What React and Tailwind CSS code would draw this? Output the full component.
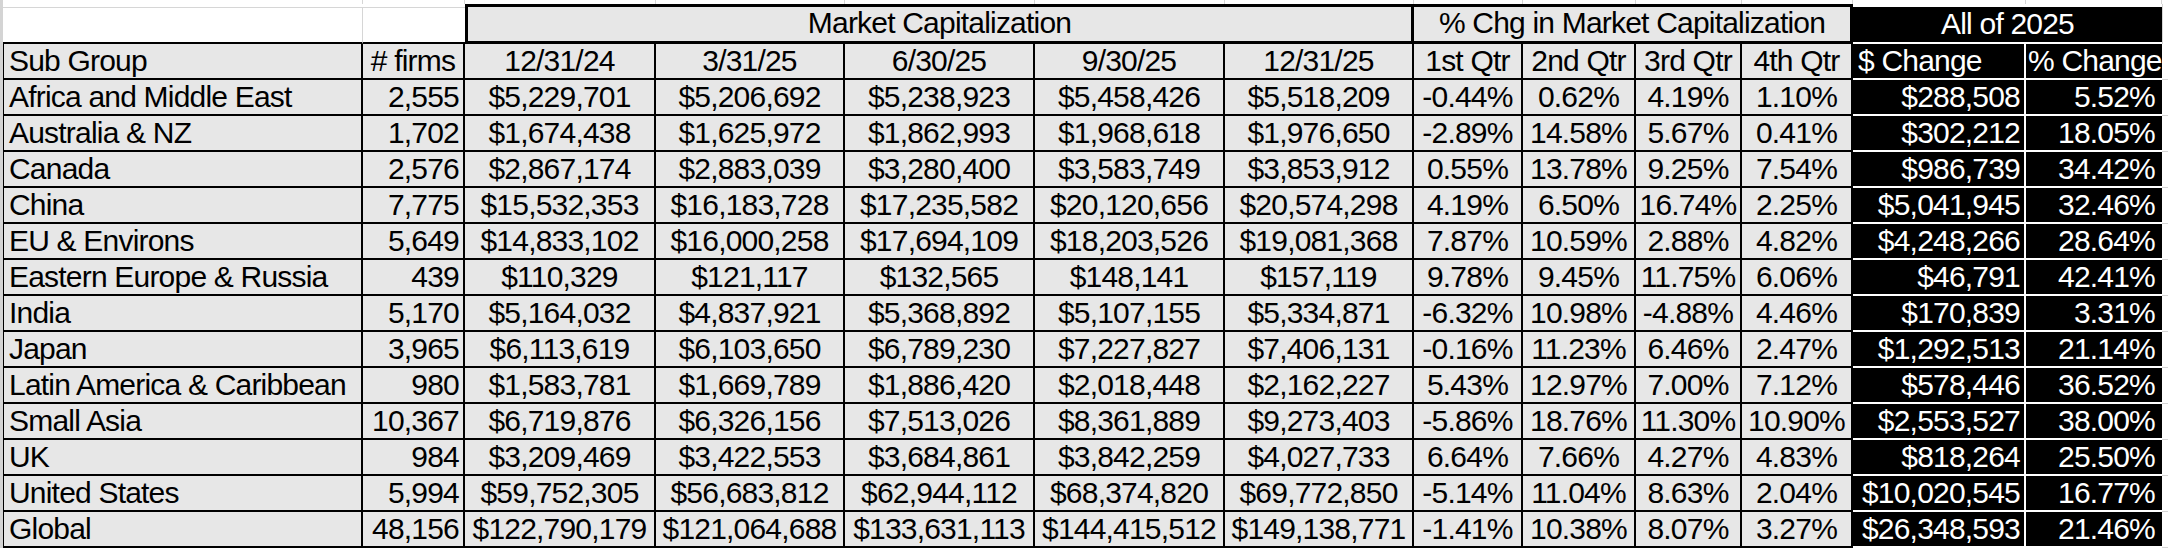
const columns = [
  "Sub Group",
  "# firms",
  "12/31/24",
  "3/31/25",
  "6/30/25",
  "9/30/25",
  "12/31/25",
  "1st Qtr",
  "2nd Qtr",
  "3rd Qtr",
  "4th Qtr",
  "$ Change",
  "% Change",
];

const rows = [
  ["Africa and Middle East", "2,555", "$5,229,701", "$5,206,692", "$5,238,923", "$5,458,426", "$5,518,209", "-0.44%", "0.62%", "4.19%", "1.10%", "$288,508", "5.52%"],
  ["Australia & NZ", "1,702", "$1,674,438", "$1,625,972", "$1,862,993", "$1,968,618", "$1,976,650", "-2.89%", "14.58%", "5.67%", "0.41%", "$302,212", "18.05%"],
  ["Canada", "2,576", "$2,867,174", "$2,883,039", "$3,280,400", "$3,583,749", "$3,853,912", "0.55%", "13.78%", "9.25%", "7.54%", "$986,739", "34.42%"],
  ["China", "7,775", "$15,532,353", "$16,183,728", "$17,235,582", "$20,120,656", "$20,574,298", "4.19%", "6.50%", "16.74%", "2.25%", "$5,041,945", "32.46%"],
  ["EU & Environs", "5,649", "$14,833,102", "$16,000,258", "$17,694,109", "$18,203,526", "$19,081,368", "7.87%", "10.59%", "2.88%", "4.82%", "$4,248,266", "28.64%"],
  ["Eastern Europe & Russia", "439", "$110,329", "$121,117", "$132,565", "$148,141", "$157,119", "9.78%", "9.45%", "11.75%", "6.06%", "$46,791", "42.41%"],
  ["India", "5,170", "$5,164,032", "$4,837,921", "$5,368,892", "$5,107,155", "$5,334,871", "-6.32%", "10.98%", "-4.88%", "4.46%", "$170,839", "3.31%"],
  ["Japan", "3,965", "$6,113,619", "$6,103,650", "$6,789,230", "$7,227,827", "$7,406,131", "-0.16%", "11.23%", "6.46%", "2.47%", "$1,292,513", "21.14%"],
  ["Latin America & Caribbean", "980", "$1,583,781", "$1,669,789", "$1,886,420", "$2,018,448", "$2,162,227", "5.43%", "12.97%", "7.00%", "7.12%", "$578,446", "36.52%"],
  ["Small Asia", "10,367", "$6,719,876", "$6,326,156", "$7,513,026", "$8,361,889", "$9,273,403", "-5.86%", "18.76%", "11.30%", "10.90%", "$2,553,527", "38.00%"],
  ["UK", "984", "$3,209,469", "$3,422,553", "$3,684,861", "$3,842,259", "$4,027,733", "6.64%", "7.66%", "4.27%", "4.83%", "$818,264", "25.50%"],
  ["United States", "5,994", "$59,752,305", "$56,683,812", "$62,944,112", "$68,374,820", "$69,772,850", "-5.14%", "11.04%", "8.63%", "2.04%", "$10,020,545", "16.77%"],
  ["Global", "48,156", "$122,790,179", "$121,064,688", "$133,631,113", "$144,415,512", "$149,138,771", "-1.41%", "10.38%", "8.07%", "3.27%", "$26,348,593", "21.46%"],
];

// alignment for the data cells, one entry per column
const cellAlign = [
  "text-left pl-[5px] border-l border-l-black",
  "text-right pr-[4px]",
  "text-center",
  "text-center",
  "text-center",
  "text-center",
  "text-center",
  "text-center",
  "text-center",
  "text-center",
  "text-center",
  "text-right pr-[4px]",
  "text-right pr-[7px]",
];

// header row 2 alignment
const headAlign = [
  "text-left pl-[5px] border-l border-l-black",
  "text-center",
  "text-center",
  "text-center",
  "text-center",
  "text-center",
  "text-center",
  "text-center",
  "text-center",
  "text-center",
  "text-center",
  "text-left pl-[5px]",
  "text-left pl-[2px]",
];

function Cell({ value, index, align }) {
  const dark = index >= 11;
  const base = "whitespace-nowrap overflow-hidden leading-[34px] border-b-2";
  if (dark) {
    return (
      <div
        className={`${base} bg-black text-white border-b-white ${
          index === 11 ? "border-r-2 border-r-white" : ""
        } ${align[index]}`}
      >
        {value}
      </div>
    );
  }
  return (
    <div
      className={`${base} bg-[#e7e7e7] text-black border-b-black border-r-2 border-r-black ${align[index]}`}
    >
      {value}
    </div>
  );
}

function GridStub() {
  return <div className="border-b border-b-[#d6d6d6]" />;
}

export default function App() {
  return (
    <div className="flex w-[2168px] h-[548px] overflow-hidden bg-white font-['Liberation_Sans',Arial,sans-serif] text-[30px] tracking-[-0.8px] text-black">
      <div className="w-[3px] shrink-0 bg-[#d4d4d4]" />

      <div className="grid grid-cols-[360px_102px_191px_189px_190px_190px_189px_109px_113px_106px_111px_173px_136px_6px] grid-rows-[4px_40px_repeat(14,36px)]">
        {/* spreadsheet top row */}
        {columns.map((c) => (
          <div key={`top-${c}`} className="border-r border-r-[#d6d6d6]" />
        ))}
        <div />

        {/* header row 1 */}
        <div className="mt-[3px] border-t border-t-[#d6d6d6] border-r border-r-[#d6d6d6] border-b-2 border-b-black" />
        <div className="mt-[3px] border-t border-t-[#d6d6d6] border-b-2 border-b-black" />
        <div className="col-span-5 bg-[#e7e7e7] border-[3px] border-black text-center leading-[32px] whitespace-nowrap">
          Market Capitalization
        </div>
        <div className="col-span-4 bg-[#e7e7e7] border-y-[3px] border-r-[3px] border-black text-center leading-[32px] whitespace-nowrap">
          % Chg in Market Capitalization
        </div>
        <div className="col-span-2 mt-[3px] bg-black text-white border-b-2 border-b-white text-center leading-[34px] whitespace-nowrap">
          All of 2025
        </div>
        <div className="border-l border-l-[#d6d6d6]" />

        {/* header row 2 */}
        {columns.map((c, i) => (
          <Cell key={`head-${c}`} value={c} index={i} align={headAlign} />
        ))}
        <GridStub />

        {/* data rows */}
        {rows.map((row) => (
          <div key={row[0]} className="contents">
            {row.map((v, i) => (
              <Cell key={`${row[0]}-${i}`} value={v} index={i} align={cellAlign} />
            ))}
            <GridStub />
          </div>
        ))}
      </div>
    </div>
  );
}
